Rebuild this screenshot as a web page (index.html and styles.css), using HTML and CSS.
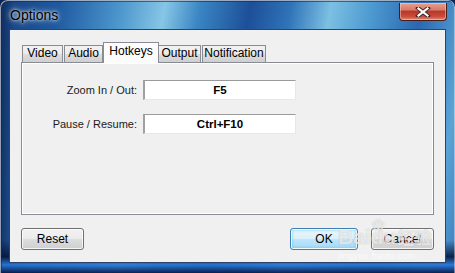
FILE: index.html
```html
<!DOCTYPE html>
<html lang="en">
<head>
	<meta charset="utf-8">
	<meta name="viewport" content="width=device-width, initial-scale=1">
	<title>Options</title>
	<link rel="stylesheet" href="styles.css">
</head>
<body>
	<div class="window">
		<div class="titlebar">
			<span class="title">Options</span>
			<a href="#" class="close" title="Close">
				<svg width="16" height="10" viewBox="0 0 16 10">
					<path d="M3 1 L13 9 M13 1 L3 9" stroke="#3a2a2a" stroke-width="4" stroke-linecap="square"/>
					<path d="M3.5 1.5 L12.5 8.5 M12.5 1.5 L3.5 8.5" stroke="#ffffff" stroke-width="2.2" stroke-linecap="square"/>
				</svg>
			</a>
		</div>
		<div class="client">
			<div class="tabs">
				<div class="tab tab-video">Video</div>
				<div class="tab tab-audio">Audio</div>
				<div class="tab tab-hotkeys selected">Hotkeys</div>
				<div class="tab tab-output">Output</div>
				<div class="tab tab-notify">Notification</div>
			</div>
			<div class="panel">
				<div class="hotkeys">
					<label>Zoom In / Out:</label>
					<div class="keybox">F5</div>
					<label>Pause / Resume:</label>
					<div class="keybox">Ctrl+F10</div>
				</div>
			</div>
			<div class="buttons">
				<button class="btn">Reset</button>
				<button class="btn btn-default">OK</button>
				<button class="btn">Cancel</button>
			</div>
		</div>
		<div class="watermark">
			<div class="wm-logo">
				<span class="wm-bai">Bai</span><span class="wm-paw">&#x2740;</span><span class="wm-du">du</span><span class="wm-cn">经验</span>
			</div>
			<div class="wm-url">jingyan.baidu.com</div>
		</div>
	</div>
</body>
</html>
```

FILE: styles.css
```css
*{
	margin: 0px;
	box-sizing: border-box;
}
body{
	width: 455px;
	height: 273px;
	overflow: hidden;
	background-color: #0c2452;
	font-family: "Liberation Sans", Arial, sans-serif;
}
.window{
	position: relative;
	width: 455px;
	height: 273px;
	padding: 0 9px 10px 9px;
	display: flex;
	flex-direction: column;
	border-radius: 7px 7px 0 0;
	background:
		linear-gradient(to bottom, rgba(10, 30, 80, 0) 88%, rgba(6, 22, 60, 0.9) 94%, rgba(40, 120, 220, 0.9) 97%, rgba(8, 26, 70, 0.95) 100%),
		linear-gradient(to right, rgba(12, 30, 70, 0.6) 0%, rgba(12, 30, 70, 0) 3%),
		linear-gradient(100deg, #17417f 0%, #1f5aa0 12%, #4b95cc 24%, #86c6e6 33%, #3a86c4 40%, #1d4f98 50%, #2f73b8 58%, #7cc0e3 66%, #4e9bd1 74%, #2a67b0 84%, #5aa4d6 94%, #3a7fc0 100%);
	box-shadow: inset 1px 1px 0 rgba(255, 255, 255, 0.55), inset -1px 0 0 rgba(255, 255, 255, 0.4), inset 2px 2px 0 rgba(20, 40, 80, 0.6);
}
.titlebar{
	height: 30px;
	display: flex;
	justify-content: space-between;
	align-items: flex-start;
}
.title{
	margin-top: 7px;
	padding-left: 1px;
	font-size: 14px;
	color: #000000;
	text-shadow: 0 0 6px rgba(255, 255, 255, 0.95), 0 0 3px rgba(255, 255, 255, 0.9);
}
.close{
	margin-top: 3px;
	margin-right: -1px;
	width: 48px;
	height: 18px;
	display: flex;
	align-items: center;
	justify-content: center;
	border: 1px solid #4a1c16;
	border-top: none;
	border-radius: 0 0 4px 4px;
	background: linear-gradient(#e7a191 0%, #d77a68 40%, #b8372a 50%, #c94e3c 80%, #e08d77 100%);
	box-shadow: inset 0 0 0 1px rgba(255, 210, 200, 0.5);
}
.client{
	flex: 1;
	display: flex;
	flex-direction: column;
	padding: 12px 11px 12px 11px;
	background-color: #f0f0f0;
	border: 1px solid #2c4566;
	font-size: 11px;
	color: #000000;
}
.tabs{
	display: flex;
	align-items: flex-end;
	height: 20px;
	padding-left: 1px;
	position: relative;
	z-index: 1;
}
.tab{
	height: 17px;
	text-align: center;
	font-size: 12px;
	line-height: 15px;
	color: #000000;
	border: 1px solid #898c95;
	border-bottom: none;
	margin-right: 1px;
	background: linear-gradient(#f2f2f2 0%, #ebebeb 50%, #dddddd 51%, #cfcfcf 100%);
}
.tab-video{ width: 41px; }
.tab-audio{ width: 39px; }
.tab-hotkeys{ width: 56px; }
.tab-output{ width: 43px; }
.tab-notify{ width: 64px; }
.tab.selected{
	height: 21px;
	margin: 0 -1px -1px -1px;
	line-height: 17px;
	background: #fcfcfc;
	position: relative;
}
.panel{
	height: 153px;
	border: 1px solid #898c95;
	background-color: #f0f0f0;
	box-shadow: inset 1px 1px 0 #ffffff, inset -1px -1px 0 #ffffff;
}
.hotkeys{
	display: grid;
	grid-template-columns: 115px 153px;
	column-gap: 6px;
	row-gap: 14px;
	padding-top: 17px;
	align-items: center;
}
.hotkeys label{
	text-align: right;
	font-size: 11px;
	color: #1a1a1a;
}
.keybox{
	height: 20px;
	background-color: #ffffff;
	border: 1px solid #e3e9ef;
	border-top-color: #9a9a9a;
	border-left: 2px solid #a0a0a0;
	text-align: center;
	font-weight: bold;
	font-size: 11.5px;
	line-height: 18px;
}
.buttons{
	display: flex;
	margin-top: 13px;
}
.btn{
	width: 63px;
	height: 22px;
	font-family: "Liberation Sans", Arial, sans-serif;
	font-size: 12px;
	color: #000000;
	border: 1px solid #707070;
	border-radius: 3px;
	background: linear-gradient(#f2f2f2 0%, #ebebeb 50%, #dddddd 51%, #cfcfcf 100%);
	box-shadow: inset 0 0 0 1px rgba(255, 255, 255, 0.8);
}
.btn-default{
	width: 68px;
	margin-left: auto;
	margin-right: 13px;
	border-color: #3c7fb1;
	background: linear-gradient(#eaf6fd 0%, #d9f0fc 50%, #bee6fd 51%, #a7d9f5 100%);
	box-shadow: inset 0 0 0 1px rgba(255, 255, 255, 0.9), inset 0 0 3px 1px rgba(80, 190, 240, 0.7);
}
.watermark{
	position: absolute;
	left: 338px;
	top: 216px;
	color: rgba(255, 255, 255, 0.7);
	pointer-events: none;
}
.wm-logo{
	display: flex;
	align-items: flex-end;
	height: 32px;
	font-weight: bold;
	text-shadow: 0 0 1px rgba(120, 120, 120, 0.5);
}
.wm-bai{
	font-size: 21px;
	line-height: 22px;
}
.wm-paw{
	position: absolute;
	left: 34px;
	top: 0px;
	font-size: 15px;
}
.wm-du{
	font-size: 21px;
	line-height: 22px;
}
.wm-cn{
	font-family: "Noto Sans CJK SC", sans-serif;
	font-size: 17px;
	line-height: 22px;
	margin-left: 1px;
}
.wm-url{
	font-size: 9px;
	letter-spacing: 0.3px;
	margin-top: 3px;
}
```
